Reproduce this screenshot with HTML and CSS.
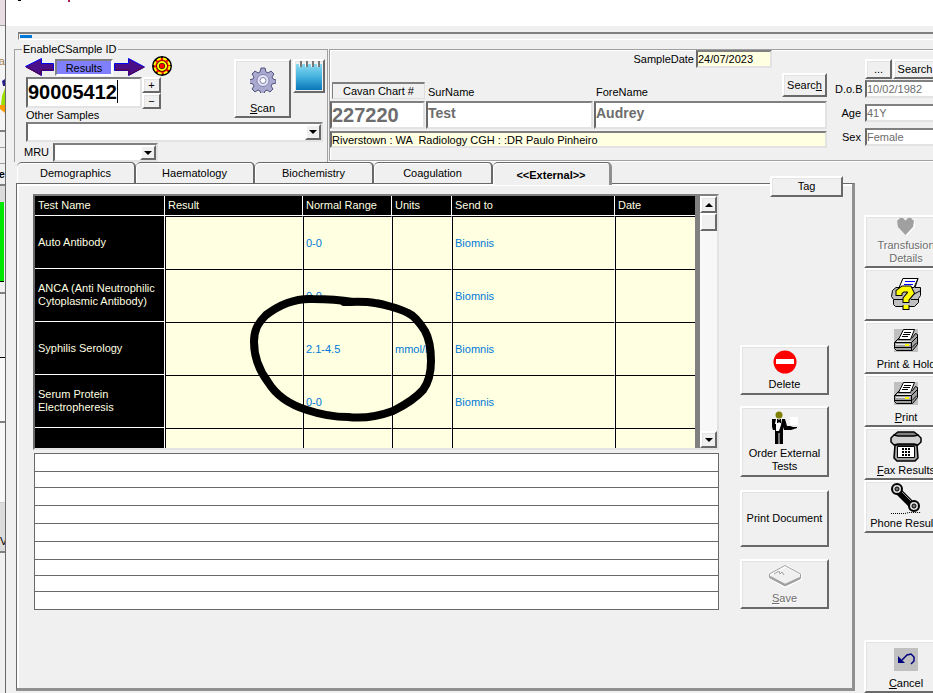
FILE: index.html
```html
<!DOCTYPE html>
<html lang="en">
<head>
<meta charset="utf-8">
<title>Results</title>
<link rel="stylesheet" href="styles.css">
</head>
<body>
<svg class="defs" aria-hidden="true">
  <symbol id="printer" viewBox="0 0 24 23">
    <path fill="#c0c0c0" d="M0 0h24v23H0z"/>
    <path fill="#a0a0a0" stroke="#000" d="M.5 13.500 5.500 8.500h13l3-4 2 1v10l-5 6h-16l-2-2z"/>
    <path fill="#fff" stroke="#000" d="M4.500 10.500 9.500.5h11l-4 10z"/>
    <path stroke="#000" d="M10 3.500h7M9 5.500h7M8 7.500h6"/>
    <path stroke="#e8e8e8" d="M3 12.500h14M2 15.500h14"/>
    <path stroke="#000" fill="none" d="M.5 13.500h17l6-6M17.500 13.500v8M1 18.500h17l5-5"/>
    <path fill="#ff0" d="M11 15h4v2h-4z"/>
  </symbol>
</svg>
<div class="screen">
  <div class="behind" aria-hidden="true">
    <div class="b-title"></div>
    <div class="b-tools"><span>ea</span>
      <svg width="5" height="36" viewBox="0 0 5 36"><path fill="#27208a" d="M2 3l3-2v7H3z"/><path fill="#9be000" d="M5 10v17H1l1-9z"/><path fill="#ff9d00" d="M0 27h5v8l-5-4z"/></svg>
    </div>
    <div class="b-row"></div>
    <div class="b-row"></div>
    <div class="b-head">se</div>
    <div class="b-gap"></div>
    <div class="b-green"></div>
    <div class="b-line"></div>
    <div class="b-marks"></div>
    <div class="b-box"></div>
    <div class="b-light"></div>
    <div class="b-v">V</div>
    <div class="b-rest"></div>
  </div>

  <main class="app">
    <div class="caption"><i class="mark"></i><i class="mark red"></i></div>
    <div class="progress"><span></span></div>

    <header class="head">
      <fieldset class="sample">
        <legend>EnableCSample ID</legend>
        <div class="sample-top">
          <div class="idcol">
            <div class="results">
              <svg width="29" height="18" viewBox="0 0 29 18"><path fill="#4b0f88" stroke="#0000f0" d="M.5 8.500 16.500.5v5h12v7h-12v5z"/><path fill="none" stroke="#600030" d="M1 9l15 8v-5h13"/></svg>
              <span class="results-label">Results</span>
              <svg width="31" height="18" viewBox="0 0 31 18"><path fill="#4b0f88" stroke="#0000f0" d="M30.500 9 14.500.5v5H.5v7h14v5z"/><path fill="none" stroke="#600030" d="M30 9l-15 8v-5H1"/></svg>
              <svg class="target" width="20" height="20" viewBox="0 0 20 20"><circle cx="10" cy="10" r="9" fill="#f00" stroke="#000" stroke-width="2"/><circle cx="10" cy="10" r="7.500" fill="none" stroke="#ff0" stroke-width="2" stroke-dasharray="4 2"/><circle cx="10" cy="10" r="4" fill="none" stroke="#000" stroke-width="3"/><circle cx="10" cy="10" r="4" fill="none" stroke="#ff0" stroke-width="2"/><path fill="#f00" d="M8 8h4v4H8z"/></svg>
            </div>
            <div class="idrow">
              <div class="id-wrap"><input class="sunk sample-id" aria-label="Sample ID" value="90005412"></div>
              <div class="spin"><button class="btn">+</button><button class="btn">−</button></div>
            </div>
            <label for="others">Other Samples</label>
          </div>
          <button class="btn scan">
            <svg width="26" height="26" viewBox="0 0 26 26"><g fill="#aaaad0" stroke="#50507c"><path d="M11 1h4l1 4 2 1 3-2 3 3-2 3 1 2 3 1v3l-4 1-1 2 2 3-3 3-3-2-2 1-1 3h-3l-1-3-2-1-3 2-3-3 2-3-1-2-4-1v-3l4-1 1-2-2-3 3-3 3 2 2-1z"/><circle cx="13" cy="13.500" r="6" fill="#e4e4f4" stroke="#8080b0"/><circle cx="13" cy="13.500" r="3" fill="#fff" stroke="#8080b0"/></g></svg>
            <span><u>S</u>can</span>
          </button>
          <button class="btn notes-btn" aria-label="Notes">
            <svg width="28" height="30" viewBox="0 0 28 30"><defs><linearGradient id="pad" x2="0" y2="1"><stop stop-color="#8ad9f0"/><stop offset=".5" stop-color="#43b2de"/><stop offset="1" stop-color="#0b76b8"/></linearGradient></defs><path fill="url(#pad)" d="M1 3h26v26H1z"/><path stroke="#e8f4f8" stroke-width="3" d="M5.500 1v5M11.500 1v5M17.500 1v5M23.500 1v5"/><path stroke="#777" stroke-width="2" d="M6 0v6M12 0v6M18 0v6M24 0v6"/></svg>
          </button>
        </div>
        <div class="drop others"><select id="others"><option></option></select><span class="arrow"></span></div>
        <div class="mru"><label for="mru">MRU</label><div class="drop"><select id="mru"><option></option></select><span class="arrow"></span></div></div>
      </fieldset>

      <section class="patient">
        <div class="who">
          <div class="date"><label for="sd">SampleDate</label><input id="sd" class="sunk cream" value="24/07/2023"></div>
          <div class="names">
            <label class="chart-label" for="chart">Cavan Chart #</label>
            <label class="name-label" for="sur">SurName</label>
            <div class="fore"><label class="name-label" for="fore">ForeName</label><button class="btn"><span>Searc<u>h</u></span></button></div>
            <input id="chart" class="sunk field big" value="227220">
            <input id="sur" class="sunk field" value="Test">
            <input id="fore" class="sunk field" value="Audrey">
          </div>
          <input class="sunk cream address" aria-label="Address" value="Riverstown : WA  Radiology CGH : :DR Paulo Pinheiro">
        </div>
        <div class="age">
          <div class="age-btns"><button class="btn">...</button><button class="btn wide">Search</button></div>
          <label for="dob">D.o.B</label><input id="dob" class="sunk" value="10/02/1982">
          <label for="age">Age</label><input id="age" class="sunk" value="41Y">
          <label for="sex">Sex</label><input id="sex" class="sunk" value="Female">
        </div>
      </section>
    </header>

    <div class="work">
      <section class="tabbed">
        <nav class="tabs">
          <button class="tab">Demographics</button>
          <button class="tab">Haematology</button>
          <button class="tab">Biochemistry</button>
          <button class="tab">Coagulation</button>
          <button class="tab on">&lt;&lt;External&gt;&gt;</button>
          <button class="btn tag">Tag</button>
        </nav>
        <div class="panel">
          <div class="lists">
            <div class="gridbox">
              <div class="gridview">
                <table>
                  <colgroup><col class="c1"><col class="c2"><col class="c3"><col class="c4"><col class="c5"><col class="c6"></colgroup>
                  <thead><tr><th>Test Name</th><th>Result</th><th>Normal Range</th><th>Units</th><th>Send to</th><th>Date</th></tr></thead>
                  <tbody>
                    <tr><th>Auto Antibody</th><td></td><td>0-0</td><td></td><td>Biomnis</td><td></td></tr>
                    <tr><th>ANCA (Anti Neutrophilic Cytoplasmic Antibody)</th><td></td><td>0-0</td><td></td><td>Biomnis</td><td></td></tr>
                    <tr><th>Syphilis Serology</th><td></td><td>2.1-4.5</td><td>mmol/l</td><td>Biomnis</td><td></td></tr>
                    <tr><th>Serum Protein Electropheresis</th><td></td><td>0-0</td><td></td><td>Biomnis</td><td></td></tr>
                    <tr><th></th><td></td><td></td><td></td><td></td><td></td></tr>
                  </tbody>
                </table>
              </div>
              <div class="scroll">
                <button class="btn" aria-label="Up"><i class="up"></i></button>
                <span class="thumb"></span>
                <button class="btn down-btn" aria-label="Down"><i class="down"></i></button>
              </div>
              <svg class="ink" viewBox="0 0 190 130" width="190" height="130"><g fill="none" stroke="#000" stroke-width="8" stroke-linecap="round" stroke-linejoin="round"><path d="M105 9C93 7 80 6 65 6C48 5 31 12 18 22C9 31 6 38 6 49C6 65 11 77 20 89C29 104 43 112 59 117C74 122 85 124 100 124C117 126 134 122 145 118C157 112 167 106 175 97C181 89 183 80 183 68C183 56 182 47 177 38C172 30 167 23 160 20C150 15 134 11 127 10C116 8 105 9 96 9"/></g></svg>
            </div>
            <div class="lines">
              <input aria-label="Comment 1"><input aria-label="Comment 2"><input aria-label="Comment 3"><input aria-label="Comment 4"><input aria-label="Comment 5"><input aria-label="Comment 6"><input aria-label="Comment 7"><input aria-label="Comment 8"><input aria-label="Comment 9">
            </div>
          </div>
          <div class="actions">
            <button class="btn delete"><svg width="24" height="24" viewBox="0 0 24 24"><circle cx="12" cy="12" r="11.500" fill="#f00"/><path fill="#fff" d="M3 9h18v5H3z"/></svg><span>Delete</span></button>
            <button class="btn order"><svg width="30" height="34" viewBox="0 0 30 34"><circle cx="9" cy="4" r="3.500" fill="#808000"/><path d="M2 8h4l3 3 3-3h3l2 7h3l3 1h4v1l-6 2h-7l-1-3v17H9.500V22H8.500v11H5V19H3l-1-3z"/><path fill="#fff" d="M6 8h6l-1 6-2 6H6l-1-7z"/><path d="M7 8h1l1 1 1-1h1v4h-1l-1-1-1 1H7zM3 13h3v6H4z"/><path fill="#fff" d="M20 6h8v8h-8z"/></svg><span>Order External<br>Tests</span></button>
            <button class="btn doc">Print Document</button>
            <button class="btn save off"><svg width="34" height="24" viewBox="0 0 34 24"><path fill="none" stroke="#fff" stroke-width="2" d="M2 11 18 2l15 9v4l-16 8-15-9z"/><path fill="none" stroke="#a0a0a0" d="M1.500 10 17 1.500 32.500 10v4.500L17 22 1.500 13.500zM6 10l5-3 1 3 2-2 2 3"/><path fill="none" stroke="#a0a0a0" stroke-width="2" d="M2 13l15 8 15-7"/></svg><span><u>S</u>ave</span></button>
          </div>
        </div>
      </section>

      <aside class="rail">
        <button class="btn off"><svg width="18" height="18" viewBox="0 0 18 18"><path fill="#fff" d="M10 18 2 9V3l3-2h3l2 2 2-2h4l2 3v5z"/><path fill="#a0a0a0" d="M8.500 17 1 9 0 3l3-3h3l2.500 2.500L11 0h3l3 3-1 6z"/></svg><span>Transfusion<br>Details</span></button>
        <button class="btn only"><svg width="31" height="32" viewBox="0 0 31 32"><path fill="#c0c0c0" stroke="#000" d="M1.500 12.500 5 9.500h4l3-9h15l-3 9h5.500v8l-2 3v4l-4 4H4.500l-2-2v-5l-2-3z"/><path fill="#fff" stroke="#000" d="M8 9.500 12 .5h15l-4 9z"/><path stroke="#00f" d="M14 3.500h10M13 6.500h9"/><path stroke="#000" fill="none" d="M3 21.500h9M20 21.500h7M21 17l8-4"/><path stroke="#000" stroke-width="7" fill="none" d="M8 18v-4l4-3h6l2 4-5 6v4M15 27v5"/><path stroke="#ff0" stroke-width="5" fill="none" d="M8 17v-3l4-3h6l2 4-5 6v3M15 27v4"/></svg></button>
        <button class="btn"><svg width="24" height="23"><use href="#printer"/></svg><span>Print &amp; Hold</span></button>
        <button class="btn"><svg width="24" height="23"><use href="#printer"/></svg><span><u>P</u>rint</span></button>
        <button class="btn fax"><svg width="32" height="31" viewBox="0 0 32 31"><path fill="#a0a0a0" stroke="#000" stroke-width="1.500" d="M5 14h22l1 13-3 3H7l-3-3z"/><path fill="#808080" stroke="#000" stroke-width="1.500" d="M4 4l4-3h16l4 3v3H4z"/><path fill="#d0d0d0" stroke="#000" stroke-width="1.500" d="M1 7l3-3 4 1h16l4-1 3 3v4l-3 3-4-1H8l-4 1-3-3z"/><path fill="#fff" stroke="#000" d="M7.500 15.500h17v11h-17z"/><path stroke="#000" stroke-width="2" stroke-dasharray="2 1" d="M12 18h8M12 21h8M12 24h8"/></svg><span><u>F</u>ax Results</span></button>
        <button class="btn fax"><svg width="32" height="33" viewBox="0 0 32 33"><path stroke="#000" stroke-width="7" d="M7 8l17 17"/><path stroke="#999" stroke-width="1" d="M10 8l13 13"/><circle cx="7" cy="7" r="5" fill="#ddd" stroke="#000" stroke-width="2"/><circle cx="7" cy="7" r="2" fill="#777" stroke="#000"/><circle cx="24" cy="24" r="5" fill="#ddd" stroke="#000" stroke-width="2"/><circle cx="24" cy="24" r="2" fill="#777" stroke="#000"/><path fill="none" stroke="#000" stroke-dasharray="1 1" d="M1 31.500h14l4-1h12"/></svg><span>Phone Results</span></button>
        <button class="btn cancel"><svg width="24" height="23" viewBox="0 0 24 23"><path fill="#c0c0c0" d="M0 0h24v23H0z"/><path fill="#000080" d="M4 8l7 7H4z"/><path fill="none" stroke="#000080" stroke-width="1.500" d="M8 12l5-5 4-1 3 3v4l-3 3"/></svg><span><u>C</u>ancel</span></button>
      </aside>
    </div>
  </main>
</div>
</body>
</html>
```
FILE: styles.css
```css
* { box-sizing: border-box; }
body { margin: 0; background: #f0f0f0; color: #000; font: 11px/13px "Liberation Sans", Arial, sans-serif; overflow: hidden; }
button, input, select { font: inherit; color: inherit; margin: 0; padding: 0; border-radius: 0; }
svg { display: block; flex: none; }
.defs { position: absolute; width: 0; height: 0; }
.screen { display: flex; height: 100vh; }

/* sliver of the window underneath */
.behind { flex: none; width: 6px; display: flex; flex-direction: column; overflow: hidden; border-right: 1px solid #696969; background: #f0f0f0; }
.behind > div { flex: none; overflow: hidden; }
.b-title { height: 26px; background: #e8dde3; border-bottom: 1px solid #a0a0a0; }
.b-tools { height: 106px; padding-top: 29px; background: #f4f4f4; color: #a67c4a; border-bottom: 2px solid #808080; }
.b-tools span { display: flex; justify-content: flex-end; height: 23px; }
.b-row { height: 16px; border-bottom: 1px solid #a0a0a0; }
.b-head { height: 22px; padding-top: 4px; display: flex; justify-content: flex-end; font-weight: bold; border-bottom: 2px solid #808080; }
.b-gap { height: 16px; background: #dcdcdc; }
.b-green { height: 80px; margin-right: 1px; background: #00e800; border-bottom: 1px solid #000; }
.b-line { height: 12px; border-bottom: 2px solid #808080; }
.b-marks { height: 64px; border-bottom: 1px solid #000; }
.b-box { height: 65px; background: #f8f8f8; border-bottom: 2px solid #808080; }
.b-light { height: 80px; background: #f8f8f8; border-bottom: 1px solid #ccc; }
.b-v { height: 50px; padding-top: 32px; background: #dcdcdc; border-bottom: 2px solid #808080; }
.behind .b-rest { flex: 1; background: #f0f0f0; }

.app { flex: 1; min-width: 0; display: flex; flex-direction: column; overflow: hidden; }
.caption { flex: none; height: 26px; background: #fff; display: flex; padding-left: 12px; gap: 47px; }
.mark { width: 3px; height: 1px; background: #000; }
.mark.red { width: 2px; height: 2px; background: #b02050; }
.progress { flex: none; height: 8px; margin: 6px 0 0 12px; border: 1px solid #808080; border-width: 2px 0 1px 1px; border-bottom-color: #fff; padding: 1px 0 0 1px; }
.progress span { display: block; width: 12px; height: 3px; background: #0078d7; }

.btn { display: flex; flex-direction: column; align-items: center; justify-content: center; text-align: center; white-space: nowrap; background: #f0f0f0; border: 2px solid; border-color: #fff #696969 #696969 #fff; box-shadow: inset 1px 1px #e3e3e3; }
.off { color: #6d6d6d; text-shadow: 1px 1px #fff; }
.sunk { min-width: 0; width: 100%; background: #fff; border: 2px solid; border-color: #808080 #e3e3e3 #e3e3e3 #696969; }
.cream { background: #ffffe1; }

.head { flex: none; display: flex; height: 122px; padding: 3px 0 0 8px; }
.sample { flex: none; width: 314px; min-width: 0; margin: 0; padding: 2px 2px 0 9px; border: 1px solid #a0a0a0; border-bottom: 0; }
.sample legend { height: 12px; line-height: 12px; margin-left: -2px; padding: 0 1px; }
.sample-top { display: flex; height: 65px; }
.idcol { width: 208px; flex: none; }
.results { display: flex; height: 20px; align-items: center; }
.results-label { width: 58px; height: 17px; line-height: 14px; text-align: center; background: #8080ff; border: 2px solid; border-color: #808080 #fff #fff #808080; }
.results svg { margin: 0 1px; }
.results .target { margin: -3px 0 0 6px; }
.idrow { display: flex; margin-left: 2px; }
.id-wrap { position: relative; width: 116px; }
.id-wrap::after { content: ""; position: absolute; left: 91px; top: 3px; width: 1px; height: 23px; background: #000; }
.sample-id { height: 31px; font-size: 20px; font-weight: bold; }
.spin { display: grid; grid-template-rows: 16px 16px; width: 19px; }
.idcol label { display: block; margin-left: 2px; }
.scan { width: 60px; height: 59px; margin: 2px 0 0 2px; gap: 9px; padding-top: 4px; }
.notes-btn { width: 32px; height: 34px; margin: 2px 0 0 2px; }
.drop { display: grid; height: 19px; border: 2px solid; border-color: #808080 #e3e3e3 #e3e3e3 #696969; background: #fff; }
.drop > * { grid-area: 1 / 1; }
.drop select { appearance: none; border: 0; background: none; width: 100%; }
.arrow { justify-self: end; width: 16px; border: 2px solid; border-color: #fff #696969 #696969 #fff; background: #f0f0f0; display: grid; place-items: center; pointer-events: none; }
.arrow::before, .down { content: ""; border: 4px solid transparent; border-top-color: #000; border-bottom: 0; }
.up { border: 4px solid transparent; border-bottom-color: #000; border-top: 0; }
.others { margin: 0 2px 0 2px; height: 20px; }
.mru { display: flex; align-items: center; gap: 4px; margin-top: 1px; }
.mru .drop { width: 105px; }

.patient { flex: 1; min-width: 0; margin: 6px -15px 1px 1px; display: flex; border: 1px solid #a0a0a0; border-right: 0; box-shadow: inset 1px 1px #fff, 0 1px #fff; }
.who { flex: 1; min-width: 0; }
.date { display: flex; justify-content: flex-end; align-items: center; gap: 2px; padding-right: 55px; }
.date input { width: 76px; height: 18px; }
.names { display: grid; grid-template-columns: 95px 167px 1fr; column-gap: 1px; row-gap: 2px; margin-top: 5px; align-items: end; }
.chart-label { margin-left: 2px; height: 17px; line-height: 15px; text-align: center; border: 1px solid #808080; border-top-width: 2px; border-color: #808080 #ddd #ddd #808080; }
.name-label { padding-left: 2px; }
.fore { display: flex; justify-content: space-between; align-items: flex-end; }
.fore .btn { width: 45px; height: 24px; margin-bottom: 2px; }
.field { height: 28px; font-size: 14px; font-weight: bold; color: #6d6d6d; padding-bottom: 4px; }
.field.big { font-size: 20px; padding: 0; }
.address { display: block; height: 17px; margin-top: 2px; white-space: pre; }
.age { flex: none; width: 121px; padding: 9px 0 0 8px; display: grid; grid-template-columns: 28px 1fr; gap: 6px 2px; align-content: start; align-items: center; }
.age-btns { grid-column: 2; display: flex; gap: 1px; margin-bottom: -5px; }
.age-btns .btn { width: 27px; height: 20px; }
.age-btns .wide { width: 44px; }
.age label { text-align: right; padding-right: 2px; }
.age input { height: 18px; color: #6d6d6d; }

.work { flex: 1; min-height: 0; display: flex; margin-right: -15px; }
.tabbed { flex: 1; min-width: 0; display: flex; flex-direction: column; padding: 0 9px 2px 10px; }
.tabs { flex: none; display: flex; height: 21px; padding-left: 1px; }
.tab { position: relative; width: 119px; background: #f0f0f0; border: 1px solid #696969; border-width: 1px 2px 0 0; border-radius: 5px 5px 0 0; box-shadow: inset 1px 1px #fff; }
.tab.on { font-weight: bold; z-index: 1; margin-bottom: -2px; padding-top: 2px; border-right: 3px solid #909090; }
.tag { width: 73px; height: 21px; margin: 14px 12px -14px auto; position: relative; z-index: 1; }
.panel { flex: 1; min-height: 0; display: flex; justify-content: space-between; padding: 10px 23px 0 16px; border: 1px solid #696969; border-right: 3px solid #909090; border-bottom: 3px solid #909090; box-shadow: inset 2px 2px #fff; }
.lists { flex: 1; min-width: 0; max-width: 686px; }
.gridbox { position: relative; display: flex; height: 256px; border: 2px solid; border-color: #808080 #e3e3e3 #e3e3e3 #696969; background: #808080; }
.gridview { flex: 1; min-width: 0; overflow: hidden; }
table { table-layout: fixed; width: 660px; border-collapse: separate; border-spacing: 0; }
.c1 { width: 130px; } .c2 { width: 138px; } .c3 { width: 89px; } .c4 { width: 60px; } .c5 { width: 163px; } .c6 { width: 80px; }
th { background: #000; color: #ffffe1; font-weight: normal; text-align: left; padding: 0 2px 0 3px; border-right: 1px solid #fff; border-bottom: 1px solid #fff; }
thead th { height: 20px; }
tbody tr { height: 53px; }
th:last-child { border-right: 0; }
td { background: #ffffe1; color: #0078d7; padding: 0 0 0 2px; border-left: 1px solid #000; border-top: 1px solid #000; border-right: 1px solid #fff; white-space: nowrap; overflow: hidden; }
td:last-child { border-right: 0; }
.scroll { flex: none; width: 17px; display: flex; flex-direction: column; background: #f8f8f8; }
.scroll .btn { height: 17px; width: 17px; }
.scroll .down-btn { margin-top: auto; }
.thumb { height: 18px; background: #f0f0f0; border: 2px solid; border-color: #fff #696969 #696969 #fff; }
.ink { position: absolute; left: 213px; top: 97px; }
.lines { display: grid; grid-template-rows: 18px 16px 18px 18px 18px 18px 16px 16px 18px; margin: 3px 0 0 1px; border: 1px solid #696969; border-bottom: 0; }
.lines input { width: 100%; min-width: 0; background: #fff; border: 0; border-bottom: 1px solid #696969; }
.actions { flex: none; width: 89px; padding-top: 151px; display: flex; flex-direction: column; }
.actions .btn { width: 89px; flex: none; }
.delete { height: 50px; gap: 4px; }
.order { height: 71px; margin-top: 11px; gap: 2px; }
.doc { height: 57px; margin-top: 13px; }
.save { height: 50px; margin-top: 12px; gap: 4px; }

.rail { flex: none; width: 84px; display: flex; flex-direction: column; padding-top: 53px; }
.rail .btn { flex: none; height: 53px; justify-content: flex-end; padding-bottom: 1px; gap: 6px; }
.rail .btn:first-child { gap: 3px; }
.rail .btn.only { justify-content: center; }
.rail .btn.fax { gap: 2px; }
.rail .btn.cancel { margin-top: auto; }
```
